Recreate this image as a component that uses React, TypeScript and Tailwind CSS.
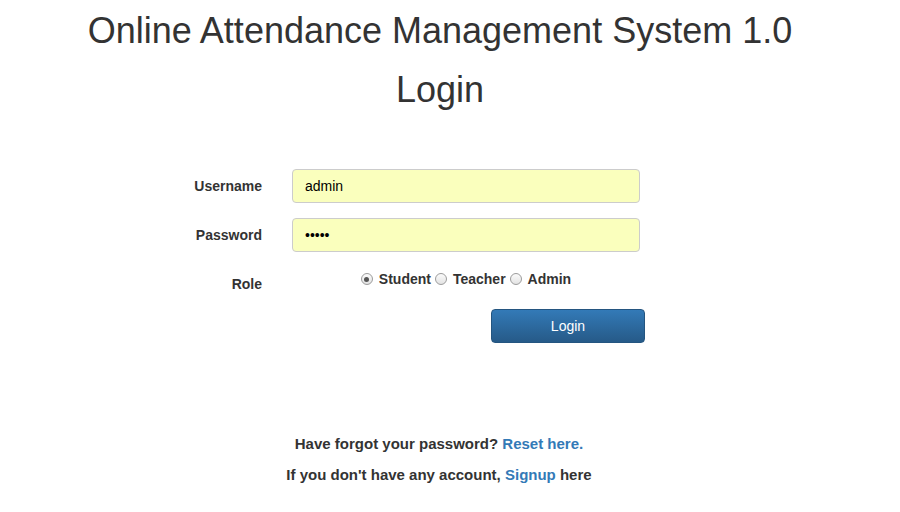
const Radio = ({ label, checked }: { label: string; checked?: boolean }) => (
    <label className="flex items-center gap-[6px]">
        <span className="flex h-[12px] w-[12px] items-center justify-center rounded-full border border-[#9c9c9c] bg-gradient-to-b from-[#fbfbfb] to-[#e3e3e3]">
            {checked && <span className="h-[5px] w-[5px] rounded-full bg-[#555]" />}
        </span>
        <span className="mr-[4px] font-bold">{label}</span>
    </label>
)

const App = () => {
    return (
        <div className="min-h-[512px] w-[900px] bg-white font-['Liberation_Sans',Arial,sans-serif] text-[14px] text-[#333]">
            <div className="w-[880px]">
                <h1 className="pt-[11px] text-center text-[36px] leading-[40px]">
                    Online Attendance Management System 1.0
                </h1>
                <h1 className="mt-[19px] text-center text-[36px] leading-[40px]">Login</h1>
            </div>

            <form className="mt-[59px] flex flex-col pl-[180px]">
                <div className="flex items-center">
                    <label className="w-[82px] text-right font-bold">Username</label>
                    <input
                        className="ml-[30px] h-[34px] w-[348px] rounded-[4px] border border-[#ccc] bg-[#faffbd] px-[12px] text-[14px] text-black outline-none"
                        defaultValue="admin"
                    />
                </div>
                <div className="mt-[15px] flex items-center">
                    <label className="w-[82px] text-right font-bold">Password</label>
                    <input
                        type="password"
                        className="ml-[30px] h-[34px] w-[348px] rounded-[4px] border border-[#ccc] bg-[#faffbd] px-[12px] text-[14px] text-black outline-none"
                        defaultValue="admin"
                    />
                </div>
                <div className="mt-[15px] flex items-start">
                    <label className="w-[82px] pt-[7px] text-right font-bold leading-[20px]">Role</label>
                    <div className="ml-[30px] flex w-[348px] justify-center pt-[2px] pl-[4px] leading-[20px]">
                        <Radio label="Student" checked />
                        <Radio label="Teacher" />
                        <Radio label="Admin" />
                    </div>
                </div>
                <div className="mt-[15px] pl-[311px]">
                    <button
                        type="button"
                        className="h-[34px] w-[154px] rounded-[4px] border border-[#245580] bg-gradient-to-b from-[#337ab7] to-[#265a88] text-[14px] text-white"
                    >
                        Login
                    </button>
                </div>
            </form>

            <div className="mt-[91px] flex w-[878px] flex-col items-center gap-[11px] text-[15px] font-bold leading-[20px]">
                <p>
                    Have forgot your password? <a className="text-[#337ab7]">Reset here.</a>
                </p>
                <p>
                    If you don't have any account, <a className="text-[#337ab7]">Signup</a> here
                </p>
            </div>
        </div>
    )
}

export default App
